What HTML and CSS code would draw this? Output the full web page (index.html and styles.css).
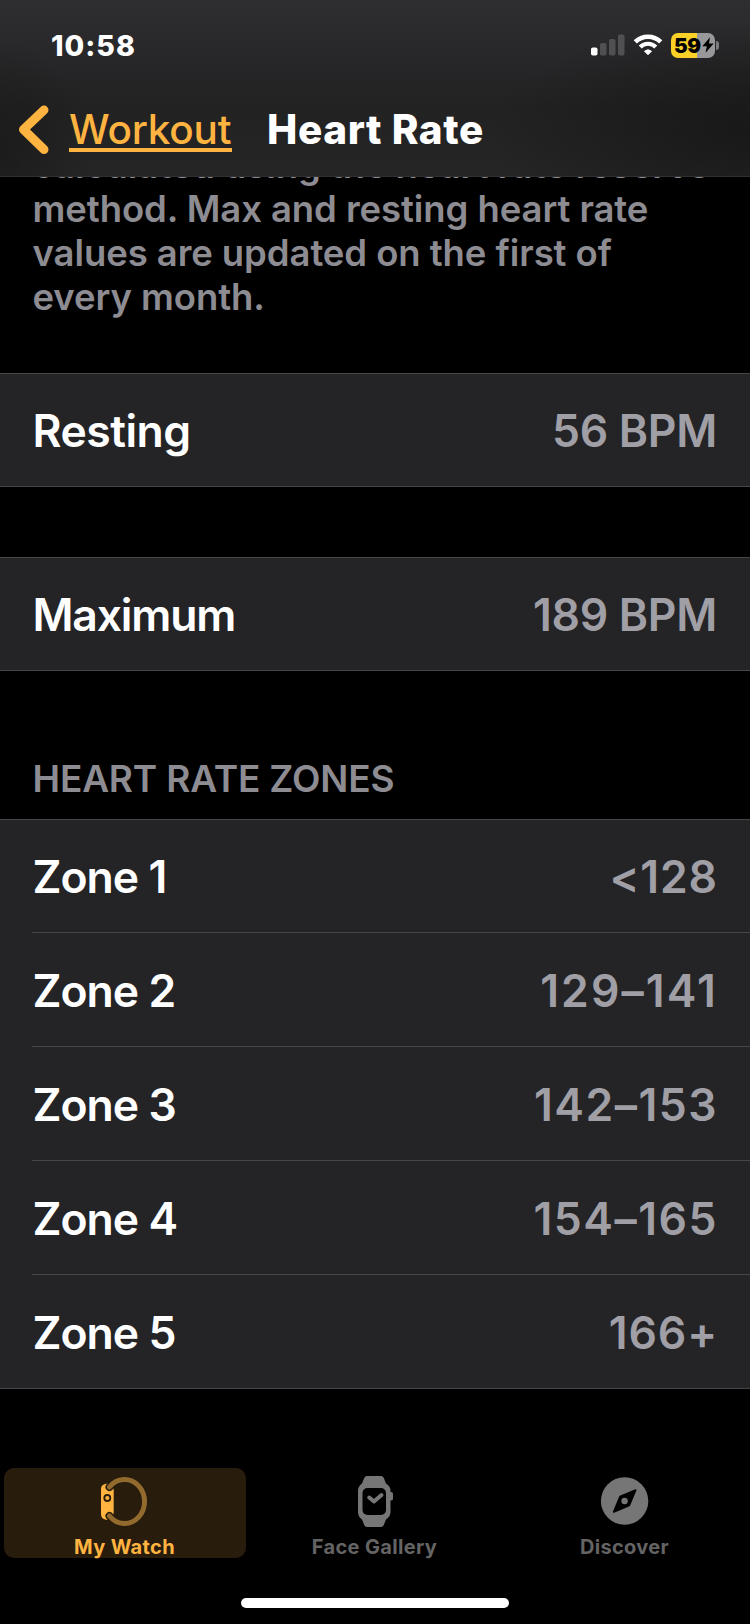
FILE: index.html
```html
<!DOCTYPE html>
<html lang="en">
<head>
  <meta charset="UTF-8" />
  <meta name="viewport" content="width=device-width, initial-scale=1.0"/>
  <title>Heart Rate</title>
  <link rel="stylesheet" href="styles.css">
</head>
<body>
  <header class="top-bar">
    <!-- Status bar -->
    <div class="status-bar">
      <span class="time">10:58</span>
      <div class="status-icons">
        <svg class="signal" width="34" height="22" viewBox="0 0 34 22">
          <rect x="0" y="13.5" width="6.5" height="8" rx="1.8" fill="#fff"/>
          <rect x="9" y="9" width="6.5" height="12.5" rx="1.8" fill="#505052"/>
          <rect x="18" y="5" width="6.5" height="16.5" rx="1.8" fill="#505052"/>
          <rect x="27" y="0.5" width="6.5" height="21" rx="1.8" fill="#505052"/>
        </svg>
        <svg class="wifi" width="30" height="22" viewBox="0 0 30 22">
          <path d="M2.300 7.900 A18.200 18.200 0 0 1 27.700 7.900" fill="none" stroke="#fff" stroke-width="4.600"/>
          <path d="M7.200 13 A11 11 0 0 1 22.800 13" fill="none" stroke="#fff" stroke-width="4.200"/>
          <path d="M11.500 17.200 A5.500 5.500 0 0 1 18.500 17.200 L15 20.700 Z" fill="#fff" stroke="#fff" stroke-width="1" stroke-linejoin="round"/>
        </svg>
        <div class="battery">
          <span class="battery-level">59</span>
          <svg class="bolt" width="12" height="16" viewBox="0 0 12 16">
            <path d="M8 0.300 L0.300 9.200 H4.800 L3.600 15.700 L11.700 6.500 H7 Z" fill="#000"/>
          </svg>
        </div>
        <span class="battery-cap"></span>
      </div>
    </div>

    <!-- Navigation -->
    <nav class="nav-bar">
      <svg class="chevron" width="32" height="50" viewBox="0 0 32 50">
        <path d="M26 5 L5.500 24.500 L26 44.500" fill="none" stroke="#ffb340" stroke-width="9" stroke-linecap="round" stroke-linejoin="round"/>
      </svg>
      <a href="#" class="back-link">Workout</a>
      <h1>Heart Rate</h1>
    </nav>
  </header>

  <main>
    <p class="note">calculated using the heart rate reserve<br>method. Max and resting heart rate<br>values are updated on the first of<br>every month.</p>

    <ul class="group">
      <li><span class="label">Resting</span><span class="value">56 BPM</span></li>
    </ul>

    <ul class="group">
      <li><span class="label maximum">Maximum</span><span class="value">189 BPM</span></li>
    </ul>

    <h2>HEART RATE ZONES</h2>
    <ul class="group zones">
      <li><span class="label">Zone 1</span><span class="value">&lt;128</span></li>
      <li><span class="label">Zone 2</span><span class="value range wide">129–141</span></li>
      <li><span class="label">Zone 3</span><span class="value range">142–153</span></li>
      <li><span class="label">Zone 4</span><span class="value range">154–165</span></li>
      <li><span class="label">Zone 5</span><span class="value">166+</span></li>
    </ul>
  </main>

  <!-- Tab bar -->
  <nav class="tab-bar">
    <a href="#" class="tab active">
      <svg width="50" height="52" viewBox="0 0 50 52">
        <path d="M6 7.700 Q1 8.500 1 13 V38 Q1 43 6 43.700 H8 Q13.700 43 13.700 36 V14 Q13.700 8 8 7.700 Z" fill="#ffb340"/>
        <path d="M9.500 11 A20 22 0 1 1 9.500 40" fill="none" stroke="#281c0c" stroke-width="8" stroke-linecap="round"/>
        <path d="M9.500 11 A20 22 0 1 1 9.500 40" fill="none" stroke="#936a2e" stroke-width="5" stroke-linecap="round"/>
        <circle cx="7.300" cy="22" r="3" fill="none" stroke="#281c0c" stroke-width="1.800"/>
      </svg>
      <span>My Watch</span>
    </a>
    <a href="#" class="tab">
      <svg width="50" height="52" viewBox="0 0 50 52">
        <path d="M17 0 H31 Q33 0 33.800 2 L36 7.500 Q40.500 10 40.500 15 V36 Q40.500 41 36 43.500 L33.800 49 Q33 51 31 51 H17 Q15 51 14.200 49 L12 43.500 Q8 41 8 36 V15 Q8 10 12 7.500 L14.200 2 Q15 0 17 0 Z" fill="#767676"/>
        <rect x="39" y="16" width="4" height="8.500" rx="1.800" fill="#767676"/>
        <rect x="12.500" y="12" width="23.500" height="27" rx="5" fill="#000"/>
        <path d="M19.200 21.500 L24 25.500 L31.500 19" fill="none" stroke="#767676" stroke-width="4" stroke-linecap="round" stroke-linejoin="round"/>
      </svg>
      <span>Face Gallery</span>
    </a>
    <a href="#" class="tab">
      <svg width="50" height="52" viewBox="0 0 50 52">
        <circle cx="24.600" cy="25" r="23.700" fill="#767676"/>
        <path d="M35.600 14.200 L20.100 20.700 L13.800 35.900 L29.200 29.500 Z" fill="#000" stroke="#000" stroke-width="1.800" stroke-linejoin="round"/>
        <circle cx="24.600" cy="25" r="3.200" fill="#767676"/>
      </svg>
      <span>Discover</span>
    </a>
  </nav>
  <div class="home-indicator"></div>
</body>
</html>
```
FILE: styles.css
```css
:root {
  --accent: #ffb340;
  --cell: #242426;
  --line: #464648;
  --muted: #8d8c92;
  --value: #a09fa6;
}

* {
  box-sizing: border-box;
}

body {
  margin: 0;
  width: 750px;
  height: 1624px;
  display: flex;
  flex-direction: column;
  overflow: hidden;
  background: #000;
  color: #fff;
  font-family: Inter, "Liberation Sans", sans-serif;
}

/* Header */
.top-bar {
  height: 177px;
  flex: none;
  background:
    radial-gradient(ellipse 260px 110px at 100% 75%, rgba(20, 20, 20, 0.7), transparent),
    radial-gradient(ellipse 90px 110px at 0 85%, rgba(24, 24, 24, 0.7), transparent),
    linear-gradient(#2e2e30, #272729 35%, #222223 60%, #252526);
  border-bottom: 1px solid #303031;
}

.status-bar {
  height: 90px;
  padding: 0 31px 0 51px;
  display: flex;
  align-items: center;
  justify-content: space-between;
}

.time {
  font-size: 28.5px;
  font-weight: 800;
  letter-spacing: 1px;
}

.status-icons {
  display: flex;
  align-items: center;
}

.wifi {
  margin: 0 8px 0 8px;
}

.battery {
  width: 44px;
  height: 25px;
  border-radius: 7px;
  display: flex;
  align-items: center;
  padding-left: 3px;
  background: linear-gradient(90deg, #fad126 59%, #98989b 59%);
  color: #000;
}

.battery-level {
  font-size: 20.5px;
  font-weight: 900;
  letter-spacing: -0.4px;
}

.bolt {
  flex: none;
  margin-left: 1px;
}

.battery-cap {
  width: 3px;
  height: 9px;
  margin-left: 1px;
  border-radius: 0 4px 4px 0;
  background: #7c7c7e;
}

.nav-bar {
  height: 80px;
  padding-left: 18px;
  display: flex;
  align-items: center;
}

.back-link {
  margin: 0 0 2px 19px;
  width: 163px;
  height: 46px;
  line-height: 48px;
  border-bottom: 4px solid var(--accent);
  color: var(--accent);
  font-size: 40.5px;
  font-weight: 500;
  letter-spacing: -0.2px;
  text-decoration: none;
}

h1 {
  margin: 0 0 2px 35px;
  font-size: 40.5px;
  font-weight: 800;
  letter-spacing: 0.6px;
}

/* Content */
main {
  flex: 1;
  overflow: hidden;
}

.note {
  margin: -34px 0 54px;
  padding-left: 32.5px;
  font-size: 36.5px;
  font-weight: 600;
  line-height: 44px;
  letter-spacing: -0.08px;
  color: var(--muted);
  white-space: nowrap;
}

.group {
  margin: 0 0 70px;
  padding: 0;
  list-style: none;
  background: var(--cell);
  border-top: 1px solid var(--line);
  border-bottom: 1px solid var(--line);
}

.group li {
  height: 112px;
  margin-left: 32px;
  padding: 2px 33px 0 0.5px;
  display: flex;
  align-items: center;
  justify-content: space-between;
  font-size: 44.5px;
  font-weight: 600;
  letter-spacing: -0.5px;
}

.label.maximum {
  letter-spacing: -1.2px;
}

.value {
  color: var(--value);
  letter-spacing: -0.3px;
}

h2 {
  margin: 0;
  padding: 16px 0 0 32.5px;
  height: 78px;
  font-size: 37px;
  line-height: 44px;
  font-weight: 600;
  letter-spacing: -0.18px;
  color: var(--muted);
}

.zones {
  margin-bottom: 0;
}

.zones li {
  height: 114px;
  border-bottom: 1px solid var(--line);
}

.zones li:first-child {
  height: 113px;
}

.zones li:last-child {
  height: 113px;
  border-bottom: none;
}

.zones .label {
  letter-spacing: -1px;
}

.zones .value {
  margin-right: -1px;
  letter-spacing: 0.9px;
}

.zones .range {
  letter-spacing: 1.5px;
}

.zones .wide {
  letter-spacing: 2.1px;
}

/* Tab bar */
.tab-bar {
  height: 90px;
  margin-bottom: 40px;
  padding: 0 4px;
  flex: none;
  display: flex;
  gap: 8px;
}

.tab {
  flex: 1;
  display: flex;
  flex-direction: column;
  align-items: center;
  padding-top: 8px;
  border-radius: 10px;
  color: #646464;
  font-size: 20px;
  font-weight: 700;
  line-height: 24px;
  letter-spacing: 0.35px;
  text-decoration: none;
}

.tab svg {
  flex: none;
}

.tab span {
  margin: 7px 1px 0 0;
}

.tab.active {
  background: #281c0c;
  color: var(--accent);
}

.home-indicator {
  width: 268px;
  height: 10px;
  flex: none;
  margin: 0 auto 16px;
  border-radius: 5px;
  background: #fff;
}
```
